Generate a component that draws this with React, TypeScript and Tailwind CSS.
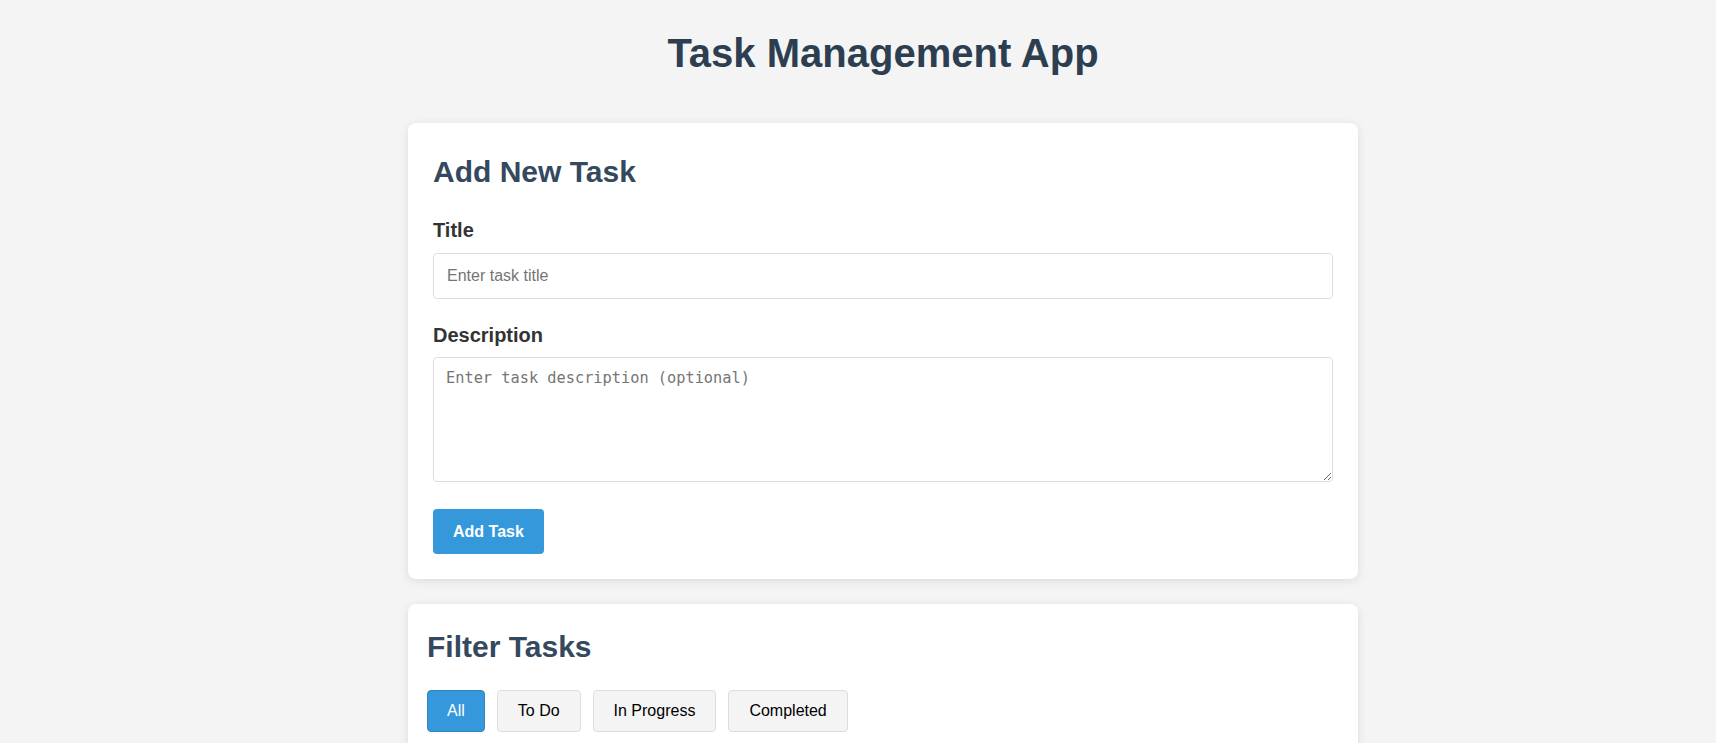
const FILTERS = ["All", "To Do", "In Progress", "Completed"];

export default function App() {
  return (
    <div className="min-h-screen bg-[#f4f4f4] pl-[50px] pb-10 font-['Liberation_Sans',Arial,sans-serif]">
      <div className="mx-auto w-[950px]">
        <h1 className="pt-[30px] mb-[47px] text-center text-[40px] leading-[46px] font-bold text-[#2c3e50]">
          Task Management App
        </h1>

        {/* Add task form */}
        <section className="bg-white rounded-lg shadow-[0_2px_10px_rgba(0,0,0,0.1)] pt-[31px] px-[25px] pb-[25px]">
          <h2 className="text-[30px] leading-[36px] font-bold text-[#34495e]">Add New Task</h2>

          <label className="block mt-[29px] text-[20px] leading-[22px] font-bold text-[#333]">Title</label>
          <input
            type="text"
            placeholder="Enter task title"
            className="block w-full mt-3 h-[46px] px-[13px] border border-[#ddd] rounded text-base text-[#333] placeholder:text-[#757575] outline-none"
          />

          <label className="block mt-[25px] text-[20px] leading-[22px] font-bold text-[#333]">Description</label>
          <textarea
            placeholder="Enter task description (optional)"
            className="block w-full mt-[11px] h-[125px] px-3 py-3 border border-[#ddd] rounded text-[15.3px] leading-[17px] font-['DejaVu_Sans_Mono',monospace] text-[#333] placeholder:text-[#757575] outline-none"
          />

          <button className="mt-[27px] h-[45px] px-5 rounded bg-[#3498db] text-white text-base font-bold">
            Add Task
          </button>
        </section>

        {/* Filters */}
        <section className="mt-[25px] bg-white rounded-lg shadow-[0_2px_10px_rgba(0,0,0,0.1)] pt-[25px] pl-[19px] pr-5 pb-5">
          <h2 className="text-[30px] leading-[36px] font-bold text-[#34495e]">Filter Tasks</h2>
          <div className="mt-[25px] flex gap-3">
            {FILTERS.map((f) => (
              <button
                key={f}
                className={
                  f === "All"
                    ? "h-[42px] px-[19px] rounded border border-[#2e86c1] bg-[#3498db] text-white text-base"
                    : "h-[42px] px-[20px] rounded border border-[#ddd] bg-[#f4f4f4] text-black text-base"
                }
              >
                {f}
              </button>
            ))}
          </div>
          <div className="h-[120px]" />
        </section>
      </div>
    </div>
  );
}
